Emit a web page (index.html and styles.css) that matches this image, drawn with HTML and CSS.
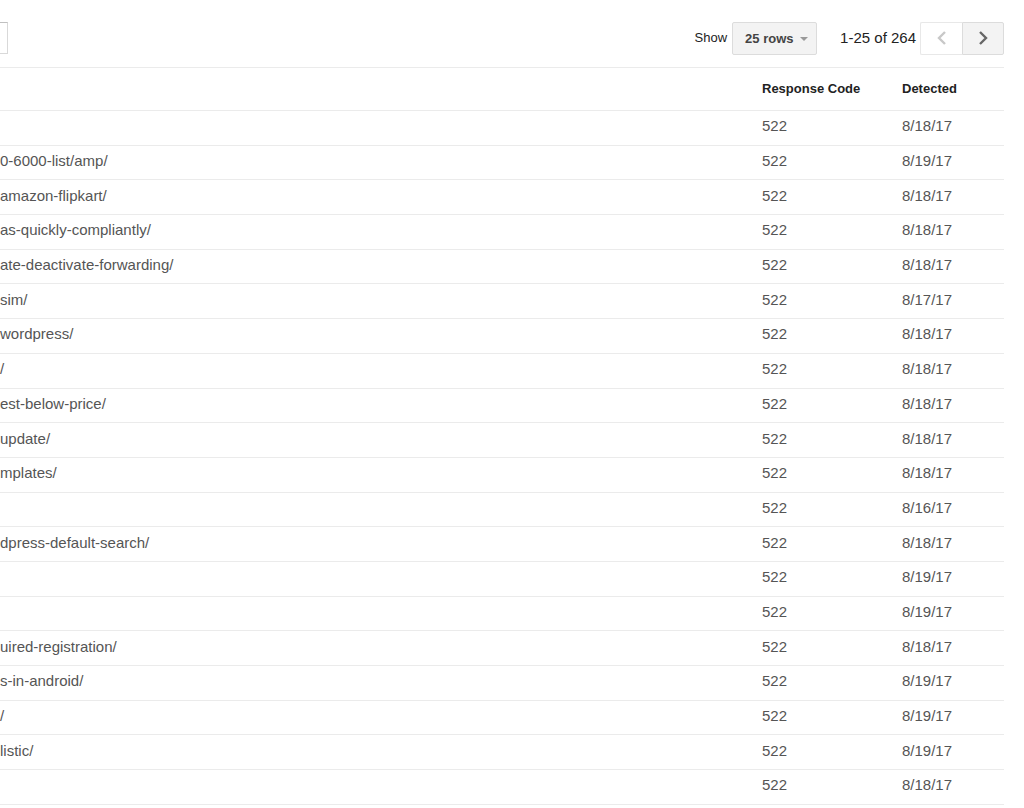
FILE: index.html
```html
<!DOCTYPE html>
<html>
<head>
<meta charset="utf-8">
<link rel="stylesheet" href="styles.css">
</head>
<body>
<div class="page">
  <div class="toolbar">
    <div class="search"></div>
    <div class="spacer"></div>
    <span class="show-label">Show</span>
    <div class="rows-btn">25 rows <span class="caret"></span></div>
    <span class="range">1-25 of 264</span>
    <div class="pager">
      <div class="pbtn prev"><svg width="12" height="16" viewBox="0 0 12 16"><path d="M9 2 L3 8 L9 14" fill="none" stroke="#c8c8c8" stroke-width="2.4"/></svg></div>
      <div class="pbtn next"><svg width="12" height="16" viewBox="0 0 12 16"><path d="M3 2 L9 8 L3 14" fill="none" stroke="#666" stroke-width="2.4"/></svg></div>
    </div>
  </div>
  <div class="table">
    <div class="row head"><div class="c url"></div><div class="c code">Response Code</div><div class="c date">Detected</div></div>
    <div class="row"><div class="c url"></div><div class="c code">522</div><div class="c date">8/18/17</div></div>
    <div class="row"><div class="c url">0-6000-list/amp/</div><div class="c code">522</div><div class="c date">8/19/17</div></div>
    <div class="row"><div class="c url">amazon-flipkart/</div><div class="c code">522</div><div class="c date">8/18/17</div></div>
    <div class="row"><div class="c url">as-quickly-compliantly/</div><div class="c code">522</div><div class="c date">8/18/17</div></div>
    <div class="row"><div class="c url">ate-deactivate-forwarding/</div><div class="c code">522</div><div class="c date">8/18/17</div></div>
    <div class="row"><div class="c url">sim/</div><div class="c code">522</div><div class="c date">8/17/17</div></div>
    <div class="row"><div class="c url">wordpress/</div><div class="c code">522</div><div class="c date">8/18/17</div></div>
    <div class="row"><div class="c url">/</div><div class="c code">522</div><div class="c date">8/18/17</div></div>
    <div class="row"><div class="c url">est-below-price/</div><div class="c code">522</div><div class="c date">8/18/17</div></div>
    <div class="row"><div class="c url">update/</div><div class="c code">522</div><div class="c date">8/18/17</div></div>
    <div class="row"><div class="c url">mplates/</div><div class="c code">522</div><div class="c date">8/18/17</div></div>
    <div class="row"><div class="c url"></div><div class="c code">522</div><div class="c date">8/16/17</div></div>
    <div class="row"><div class="c url">dpress-default-search/</div><div class="c code">522</div><div class="c date">8/18/17</div></div>
    <div class="row"><div class="c url"></div><div class="c code">522</div><div class="c date">8/19/17</div></div>
    <div class="row"><div class="c url"></div><div class="c code">522</div><div class="c date">8/19/17</div></div>
    <div class="row"><div class="c url">uired-registration/</div><div class="c code">522</div><div class="c date">8/18/17</div></div>
    <div class="row"><div class="c url">s-in-android/</div><div class="c code">522</div><div class="c date">8/19/17</div></div>
    <div class="row"><div class="c url">/</div><div class="c code">522</div><div class="c date">8/19/17</div></div>
    <div class="row"><div class="c url">listic/</div><div class="c code">522</div><div class="c date">8/19/17</div></div>
    <div class="row"><div class="c url"></div><div class="c code">522</div><div class="c date">8/18/17</div></div>
  </div>
</div>
</body>
</html>
```
FILE: styles.css
```css
html, body {
  margin: 0;
  padding: 0;
  background: #fff;
  overflow: hidden;
}
body {
  font-family: "Liberation Sans", Arial, sans-serif;
  color: #555;
}
.page {
  width: 1004px;
}
.toolbar {
  display: flex;
  align-items: center;
  height: 34px;
  margin-top: 21px;
  margin-bottom: 12px;
}
.search {
  width: 200px;
  margin-left: -192px;
  height: 32px;
  box-sizing: border-box;
  border: 1px solid #d9d9d9;
  border-top-color: #c0c0c0;
  background: #fff;
}
.spacer {
  flex: 1;
}
.show-label {
  font-size: 13px;
  color: #222;
  margin-right: 5px;
  padding-bottom: 1px;
}
.rows-btn {
  box-sizing: border-box;
  height: 33px;
  width: 85px;
  display: flex;
  align-items: center;
  padding-left: 12px;
  font-size: 13px;
  font-weight: bold;
  color: #444;
  background: #f3f3f3;
  border: 1px solid #dcdcdc;
  border-radius: 2px;
}
.caret {
  display: inline-block;
  width: 0;
  height: 0;
  border-left: 4px solid transparent;
  border-right: 4px solid transparent;
  border-top: 4px solid #999;
  margin-left: 6px;
  margin-top: 1px;
}
.range {
  font-size: 15px;
  color: #222;
  margin-left: 23px;
  margin-right: 4px;
  padding-bottom: 1px;
}
.pager {
  display: flex;
}
.pbtn {
  box-sizing: border-box;
  width: 42px;
  height: 33px;
  display: flex;
  align-items: center;
  justify-content: center;
  border: 1px solid #e8e8e8;
}
.prev {
  background: #fff;
  border-right: none;
  border-radius: 2px 0 0 2px;
}
.next {
  background: #f3f3f3;
  border-color: #dcdcdc;
  border-radius: 0 2px 2px 0;
}
.table {
  border-top: 1px solid #ebebeb;
}
.row {
  display: grid;
  grid-template-columns: 1fr 140px 118px;
  height: 34.7px;
  box-sizing: border-box;
  border-bottom: 1px solid #ebebeb;
  padding-bottom: 4px;
  align-items: center;
  font-size: 15px;
}
.row.head {
  height: 43px;
  padding-bottom: 2px;
  font-size: 13px;
  font-weight: bold;
  color: #222;
}
.c {
  white-space: nowrap;
  overflow: hidden;
}
.code, .date {
  padding-left: 16px;
}
```
